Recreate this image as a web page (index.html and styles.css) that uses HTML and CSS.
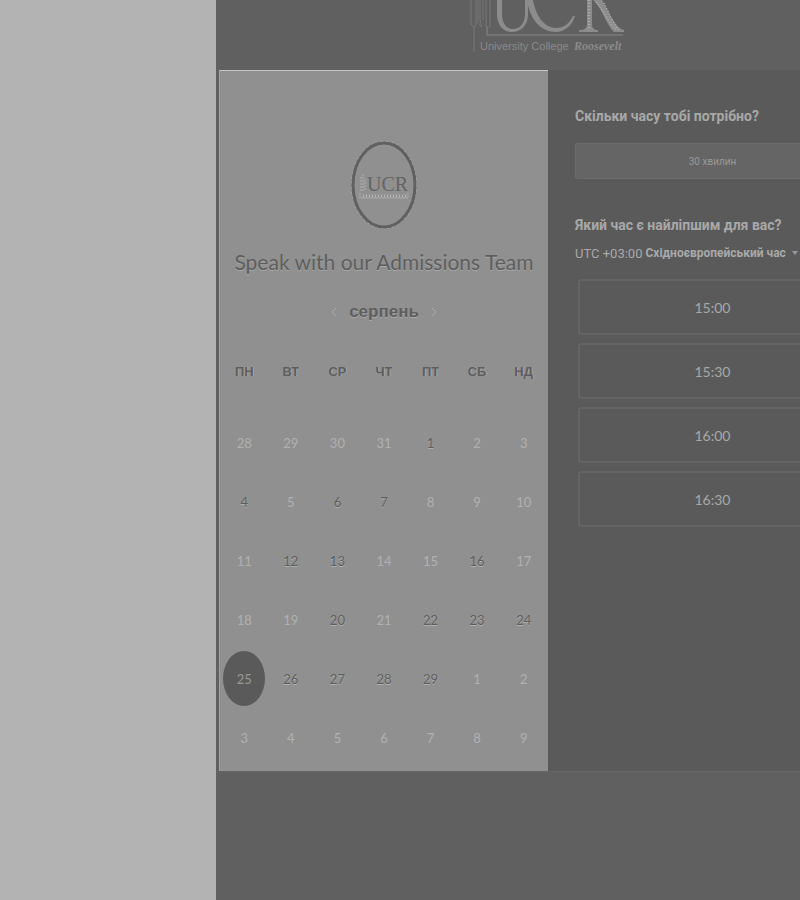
FILE: index.html
```
<!DOCTYPE html>
<html lang="uk">
<head>
<meta charset="utf-8">
<meta name="viewport" content="width=device-width, initial-scale=1">
<title>Speak with our Admissions Team</title>
<link rel="stylesheet" href="styles.css">
</head>
<body>
<aside class="margin"></aside>
<main class="page">
  <div class="content">
    <header class="banner">
      <svg class="banner-logo" viewBox="0 0 156 54" role="img" aria-label="University College Roosevelt">
        <g class="tower">
          <path d="M1 0V24L4 28V52M4 28L6 24V0M10 0V20L12 27M8 0V23L11 27M13 0V20M16 0V27M20 0V27M16 27H19"/>
          <path class="rule" d="M17 27V35H153"/>
        </g>
        <g class="mark">
          <path d="M27 0V14C27 25 33 32 42 32S58 25 58 14V0H55V14C55 23 50 29 43 29S32 23 32 14V0Z"/>
          <path d="M57 0C60 20 71 32 86 32C94 32 102 26 105 16H103C99 24 94 28 86 28C75 28 66 17 63 0Z"/>
          <path d="M117 0V24C117 28 115 30 109 30V32H128V30C124 30 122 28 122 24V0ZM123 0C132 8 136 24 144 32H154V30C145 28 139 12 132 0Z"/>
          <path class="rough" d="M119 0V30M126 2C134 10 138 24 147 30M134 3C139 12 143 24 149 30"/>
        </g>
        <text class="word" x="10" y="50">University College</text>
        <text class="script" x="104" y="50">Roosevelt</text>
      </svg>
    </header>
    <div class="booking">
      <section class="calendar">
        <svg class="seal" viewBox="0 0 66 88" role="img" aria-label="UCR">
          <ellipse class="halo" cx="33" cy="44" rx="32" ry="43"/>
          <ellipse class="ring" cx="33" cy="44" rx="31" ry="42"/>
          <path class="seal-lines" d="M10 36V50M12 33V50M14 38V50M9 52V57H57V52"/>
          <path class="seal-dots" d="M12 55H55"/>
          <text x="16" y="50">UCR</text>
        </svg>
        <h1>Speak with our Admissions Team</h1>
        <nav class="month">
          <button type="button" aria-label="Попередній місяць"><svg viewBox="0 0 6 10"><path d="M5 1L1 5L5 9"/></svg></button>
          <h2>серпень</h2>
          <button type="button" aria-label="Наступний місяць"><svg viewBox="0 0 6 10"><path d="M1 1L5 5L1 9"/></svg></button>
        </nav>
        <table>
          <thead><tr><th>ПН</th><th>ВТ</th><th>СР</th><th>ЧТ</th><th>ПТ</th><th>СБ</th><th>НД</th></tr></thead>
          <tbody>
            <tr><td class="off">28</td><td class="off">29</td><td class="off">30</td><td class="off">31</td><td>1</td><td class="off">2</td><td class="off">3</td></tr>
            <tr><td>4</td><td class="off">5</td><td>6</td><td>7</td><td class="off">8</td><td class="off">9</td><td class="off">10</td></tr>
            <tr><td class="off">11</td><td>12</td><td>13</td><td class="off">14</td><td class="off">15</td><td>16</td><td class="off">17</td></tr>
            <tr><td class="off">18</td><td class="off">19</td><td>20</td><td class="off">21</td><td>22</td><td>23</td><td>24</td></tr>
            <tr><td><button type="button" class="selected">25</button></td><td>26</td><td>27</td><td>28</td><td>29</td><td class="off">1</td><td class="off">2</td></tr>
            <tr><td class="off">3</td><td class="off">4</td><td class="off">5</td><td class="off">6</td><td class="off">7</td><td class="off">8</td><td class="off">9</td></tr>
          </tbody>
        </table>
      </section>
      <section class="times">
        <h3>Скільки часу тобі потрібно?</h3>
        <button type="button" class="duration">30 хвилин</button>
        <h3>Який час є найліпшим для вас?</h3>
        <button type="button" class="zone"><span>UTC +03:00</span> <b>Східноєвропейський час</b><i class="caret"></i></button>
        <div class="slots">
          <button type="button">15:00</button>
          <button type="button">15:30</button>
          <button type="button">16:00</button>
          <button type="button">16:30</button>
        </div>
      </section>
    </div>
  </div>
</main>
</body>
</html>
```
FILE: styles.css
```
* { box-sizing: border-box; }

body {
  margin: 0;
  min-height: 100vh;
  display: grid;
  grid-template-columns: 27% minmax(0, 1fr);
  background: #b3b3b3;
  color: #a8a8a8;
  font-family: "Liberation Sans", sans-serif;
}

h1, h2, h3 { margin: 0; }

button {
  padding: 0;
  border: 0;
  background: none;
  color: inherit;
  font: inherit;
}

.page {
  overflow: hidden;
  padding-left: 3px;
  background: #606060;
}

.content { width: 658px; }

.banner {
  height: 70px;
  display: flex;
  justify-content: center;
}

.banner-logo { width: 156px; height: 54px; }
.tower { fill: none; stroke: #777; stroke-width: 1; }
.rule { stroke: #858585; }
.mark { fill: #8c8c8c; }
.rough { fill: none; stroke: #d0d0d0; stroke-width: 1; stroke-dasharray: 1 2; }
.word { fill: #8a8a8a; font: 11px "Liberation Sans", sans-serif; }
.script { fill: #8a8a8a; font: italic bold 12px "Liberation Serif", serif; }

.booking {
  display: grid;
  grid-template-columns: repeat(2, minmax(0, 1fr));
  box-shadow: 0 1px 3px #686868;
}

.calendar {
  padding: 70px 1px 4px;
  border-top: 1px solid #c4c4c4;
  border-left: 1px solid #a0a0a0;
  background: #909090;
  color: #5e5e5e;
  text-align: center;
}

.seal { display: block; width: 66px; height: 88px; margin: 0 auto; }
.ring { fill: none; stroke: #606060; stroke-width: 3; }
.halo { fill: none; stroke: #c8c8c8; stroke-width: 2; stroke-dasharray: 1 4; }
.seal-lines { fill: none; stroke: #b0b0b0; stroke-width: 1; stroke-dasharray: 2 1; }
.seal-dots { fill: none; stroke: #b8b8b8; stroke-width: 3; stroke-dasharray: 1 2; }
.seal text { fill: #646464; font: 20px "Liberation Serif", serif; }

h1 {
  font: 400 21px/66px Lato, sans-serif;
  text-shadow: 0 1px 0 #a8a8a8;
  white-space: nowrap;
}

.month {
  height: 34px;
  display: flex;
  align-items: center;
  justify-content: center;
  gap: 12px;
}

.month h2 { font-size: 17px; line-height: 34px; text-shadow: 0 1px 0 #a8a8a8; }
.month svg { display: block; width: 6px; height: 10px; fill: none; stroke: #bcbcbc; stroke-width: 1; stroke-dasharray: 2 1; }

table {
  width: 100%;
  border-collapse: collapse;
  table-layout: fixed;
}

th { height: 84px; padding: 0; font-size: 13px; text-shadow: 1px 0 0 #a8a8a8; }
td { height: 59px; padding: 0; font-family: Lato, sans-serif; font-size: 13px; text-shadow: 0 1px 0 #b0b0b0; }
.off { color: #b0b0b0; text-shadow: none; }

.selected {
  width: 42px;
  height: 55px;
  border-radius: 50%;
  background: #5a5a5a;
  color: #999;
  text-shadow: none;
}

.times {
  padding: 32px 27px;
  background: #5a5a5a;
}

h3 { font: bold 14px/28px Roboto, sans-serif; white-space: nowrap; }

.duration {
  display: block;
  width: 100%;
  height: 36px;
  margin: 13px 0 32px;
  border: 1px solid #6c6c6c;
  border-radius: 2px;
  background: #656565;
  color: #999;
  font: 10px Roboto, sans-serif;
}

.zone {
  display: flex;
  align-items: center;
  gap: 3px;
  height: 28px;
  font: 13px Roboto, sans-serif;
  white-space: nowrap;
}

.zone b { font-size: 12px; }

.caret {
  margin-left: 3px;
  border: 3px solid transparent;
  border-top: 4px solid #999;
  border-bottom: 0;
}

.slots {
  display: grid;
  gap: 8px;
  padding: 12px 3px 0;
}

.slots button {
  height: 56px;
  border: 2px solid #646464;
  border-radius: 3px;
  font: 14px Lato, sans-serif;
}
```
